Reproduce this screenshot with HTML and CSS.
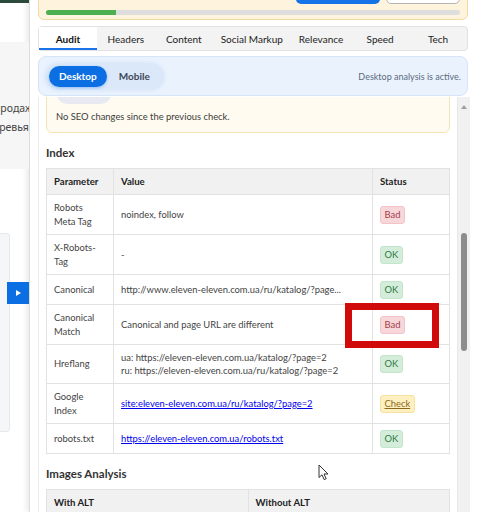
FILE: index.html
```html
<!DOCTYPE html>
<html lang="en">
<head>
  <meta charset="UTF-8" />
  <meta name="viewport" content="width=device-width, initial-scale=1.0" />
  <title>SEO Audit</title>
  <link rel="stylesheet" href="styles.css">
</head>
<body>
  <div class="site">
    <div class="site-top"></div>
    <div class="site-bar"></div>
    <div class="site-text">
      <p class="l1">продаж</p>
      <p class="l2">деревья</p>
    </div>
    <div class="site-card"></div>
    <button class="site-toggle"></button>
  </div>

  <aside class="panel">
    <div class="status">
      <div class="actions">
        <button class="btn-primary"></button>
        <button class="btn-secondary"></button>
      </div>
      <div class="progress"><div class="progress-fill" style="width: 17%"></div></div>
    </div>

    <nav class="tabs">
      <span class="tab active">Audit</span>
      <span class="tab">Headers</span>
      <span class="tab">Content</span>
      <span class="tab">Social Markup</span>
      <span class="tab">Relevance</span>
      <span class="tab">Speed</span>
      <span class="tab">Tech</span>
    </nav>

    <div class="device-bar">
      <div class="device-group">
        <button class="device-btn active">Desktop</button>
        <button class="device-btn">Mobile</button>
      </div>
      <span class="device-note">Desktop analysis is active.</span>
    </div>

    <div class="scroll-area">
      <div class="scroll-content">
        <div class="inner">
          <div class="notice">
            <div class="notice-pill"></div>
            <p>No SEO changes since the previous check.</p>
          </div>

          <h3>Index</h3>
          <table class="data">
            <thead>
              <tr><th class="col-param">Parameter</th><th>Value</th><th class="col-status">Status</th></tr>
            </thead>
            <tbody>
              <tr><td>Robots Meta Tag</td><td>noindex, follow</td><td><span class="badge bad">Bad</span></td></tr>
              <tr><td>X-Robots-Tag</td><td>-</td><td><span class="badge ok">OK</span></td></tr>
              <tr><td>Canonical</td><td>http://www.eleven-eleven.com.ua/ru/katalog/?page...</td><td><span class="badge ok">OK</span></td></tr>
              <tr><td>Canonical Match</td><td>Canonical and page URL are different</td><td><span class="badge bad">Bad</span></td></tr>
              <tr><td>Hreflang</td><td class="small">ua: https://eleven-eleven.com.ua/katalog/?page=2<br>ru: https://eleven-eleven.com.ua/ru/katalog/?page=2</td><td><span class="badge ok">OK</span></td></tr>
              <tr><td>Google Index</td><td><a href="#">site:eleven-eleven.com.ua/ru/katalog/?page=2</a></td><td><span class="badge check">Check</span></td></tr>
              <tr><td>robots.txt</td><td><a href="#">https://eleven-eleven.com.ua/robots.txt</a></td><td><span class="badge ok">OK</span></td></tr>
            </tbody>
          </table>

          <h3>Images Analysis</h3>
          <table class="data">
            <thead>
              <tr><th>With ALT</th><th>Without ALT</th></tr>
            </thead>
          </table>
        </div>
      </div>
      <div class="scrollbar">
        <span class="scroll-arrow"></span>
        <span class="scroll-thumb"></span>
      </div>
    </div>
  </aside>

  <div class="highlight"></div>
  <svg class="cursor" width="12" height="17" viewBox="0 0 12 17">
    <path d="M1 1 V13.5 L4 10.8 L6.2 15.6 L8.2 14.7 L6 10 H10 Z" fill="#fff" stroke="#333" stroke-width="1" stroke-linejoin="round"/>
  </svg>
</body>
</html>
```

FILE: styles.css
```css
body {
  margin: 0;
  width: 480px;
  height: 512px;
  overflow: hidden;
  position: relative;
  display: flex;
  font-family: Lato, "Noto Sans", sans-serif;
  font-size: 10px;
  color: #333;
  background: #fff;
}
button {
  font-family: inherit;
  border: none;
  padding: 0;
  cursor: pointer;
}

.site {
  width: 29px;
  flex-shrink: 0;
  overflow: hidden;
  position: relative;
  font-family: "Noto Sans", sans-serif;
}
.site-top {
  height: 3px;
  background: #2b4a3b;
}
.site-bar {
  height: 39px;
}
.site-text {
  height: 127px;
  box-sizing: border-box;
  padding-top: 57px;
  background: #f6f6f6;
  font-size: 10.5px;
  line-height: 19px;
  color: #444;
  white-space: nowrap;
}
.site-text p {
  margin: 0;
}
.site-text .l1 {
  margin-left: -6px;
}
.site-text .l2 {
  margin-left: -13px;
}
.site-card {
  margin-top: 64px;
  width: 10px;
  height: 199px;
  box-sizing: border-box;
  background: #f5f6f7;
  border: 1px solid #e7e7e7;
  border-left: none;
  border-radius: 0 4px 4px 0;
}
.site-toggle {
  position: absolute;
  left: 7px;
  top: 282px;
  width: 22px;
  height: 22px;
  background: #0b6fe3;
  display: flex;
  align-items: center;
  justify-content: center;
}
.site-toggle::after {
  content: "";
  border-left: 5px solid #fff;
  border-top: 3px solid transparent;
  border-bottom: 3px solid transparent;
}

.panel {
  flex: 1;
  min-width: 0;
  display: flex;
  flex-direction: column;
  padding: 0 10px 0 8px;
  border-left: 1px solid #dcdcdc;
  box-shadow: -3px 0 5px rgba(0, 0, 0, 0.08);
  background: #fff;
}

.status {
  margin: -29px 2px 0 0;
  padding: 6px 7px 4px;
  background: #fef3dc;
  border: 1px solid #f3d9a3;
  border-radius: 6px;
}
.actions {
  display: flex;
  justify-content: flex-end;
  gap: 6px;
}
.btn-primary {
  width: 84px;
  height: 26px;
  background: #1473e6;
  border-radius: 5px;
}
.btn-secondary {
  width: 74px;
  height: 26px;
  box-sizing: border-box;
  background: #fff;
  border: 1px solid #b5b5b5;
  border-radius: 5px;
}
.progress {
  margin-top: 6px;
  height: 5px;
  background: #dedede;
  border-radius: 3px;
  overflow: hidden;
}
.progress-fill {
  height: 100%;
  background: #4caf50;
}

.tabs {
  display: flex;
  margin: 6px 2px 0 0;
  height: 25px;
  box-sizing: border-box;
  background: #f3f3f3;
  border: 1px solid #e2e2e2;
  border-radius: 4px;
}
.tab {
  flex: 1;
  display: flex;
  align-items: center;
  justify-content: center;
  padding: 0 8px;
  white-space: nowrap;
  color: #222;
}
.tab.active {
  background: #fff;
  font-weight: bold;
  color: #111;
  border-bottom: 2px solid #1a73e8;
  padding-top: 2px;
}

.device-bar {
  display: flex;
  align-items: center;
  justify-content: space-between;
  margin: 5px 2px 0 0;
  height: 40px;
  box-sizing: border-box;
  padding: 0 6px;
  background: #eaf3fd;
  border: 1px solid #d5e4f8;
  border-radius: 8px;
}
.device-group {
  display: flex;
  gap: 2px;
  padding: 3px 4px;
  background: #dae8fa;
  border-radius: 14px;
  box-shadow: 0 0 5px rgba(26, 115, 232, 0.12);
}
.device-btn {
  height: 21px;
  padding: 0 10px;
  border-radius: 11px;
  background: transparent;
  font-size: 10px;
  font-weight: bold;
  color: #3f4756;
}
.device-btn.active {
  background: #0b6fe3;
  color: #fff;
  box-shadow: 0 1px 3px rgba(11, 111, 227, 0.35);
}
.device-note {
  font-size: 9px;
  color: #5b6a80;
}

.scroll-area {
  flex: 1;
  min-height: 0;
  display: flex;
  margin-top: 1px;
  overflow: hidden;
}
.scroll-content {
  flex: 1;
  min-width: 0;
  padding: 0 7px;
  border-left: 1px solid #ececec;
  overflow: hidden;
}
.inner {
  margin-top: -22px;
}
.scrollbar {
  width: 13px;
  box-sizing: border-box;
  display: flex;
  flex-direction: column;
  align-items: center;
  background: #f1f1f1;
  border-left: 1px solid #e8e8e8;
}
.scroll-arrow {
  margin-top: 8px;
  border-bottom: 4px solid #a0a0a0;
  border-left: 3.5px solid transparent;
  border-right: 3.5px solid transparent;
}
.scroll-thumb {
  margin-top: 124px;
  width: 6px;
  height: 118px;
  background: #8d8d8d;
  border-radius: 3px;
}

.notice {
  padding: 8px 9px;
  background: #fffbf0;
  border: 1px solid #f3e3b5;
  border-radius: 6px;
}
.notice-pill {
  margin-left: 1px;
  width: 54px;
  height: 20px;
  background: #e7eaf0;
  border-radius: 10px;
}
.notice p {
  margin: 6px 0 0;
  font-size: 9.4px;
  line-height: 14px;
  color: #3b3b3b;
}

h3 {
  margin: 12px 0 7px;
  font-size: 11.5px;
  line-height: 16px;
  color: #333;
}

.data {
  width: 100%;
  border-collapse: collapse;
  table-layout: fixed;
  line-height: 14px;
}
.data th,
.data td {
  border: 1px solid #e2e2e2;
  padding: 5.5px 7px;
  text-align: left;
  vertical-align: middle;
}
.data th {
  background: #f1f1f1;
  font-size: 9.6px;
  font-weight: bold;
  color: #222;
}
.data td {
  font-size: 9.4px;
  color: #444;
}
.data .col-param {
  width: 52px;
}
.data .col-status {
  width: 62px;
}
.data td.small {
  line-height: 13.5px;
  white-space: nowrap;
}
.data a {
  color: #0000ee;
}

.badge {
  display: inline-block;
  height: 18px;
  box-sizing: border-box;
  line-height: 16px;
  padding: 0 3.5px;
  border: 1px solid transparent;
  border-radius: 3px;
  vertical-align: middle;
}
.badge.bad {
  background: #f8d7da;
  border-color: #f2c4c8;
  color: #a2404a;
}
.badge.ok {
  background: #d4edda;
  border-color: #c3e6cb;
  color: #2f7a43;
}
.badge.check {
  background: #fff0c2;
  border-color: #f7e1a0;
  color: #8a6a1a;
  text-decoration: underline;
}

.highlight {
  position: absolute;
  left: 345px;
  top: 303px;
  width: 94px;
  height: 45px;
  box-sizing: border-box;
  border: 7px solid #d10a0a;
}
.cursor {
  position: absolute;
  left: 318px;
  top: 464px;
}
```
